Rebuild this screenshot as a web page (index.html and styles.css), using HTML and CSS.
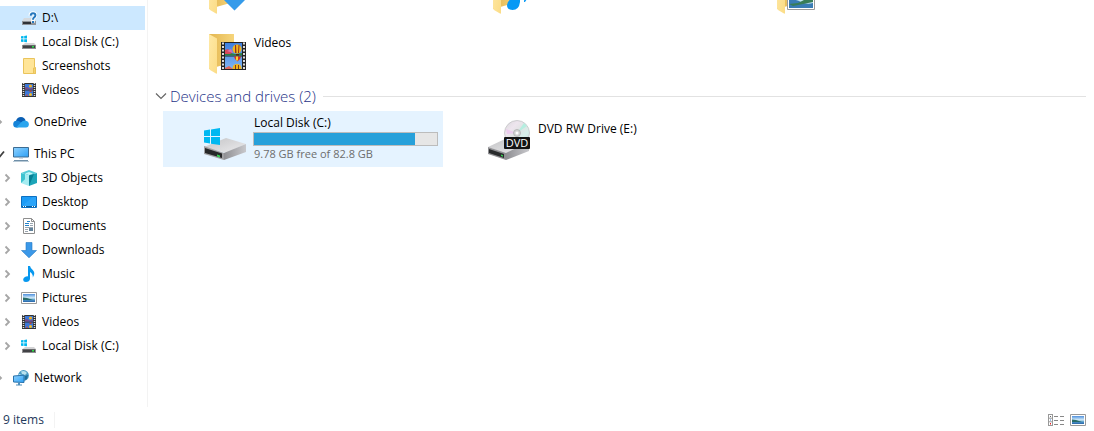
FILE: index.html
```html
<!DOCTYPE html>
<html lang="en">
<head>
<meta charset="utf-8">
<title>This PC</title>
<link rel="stylesheet" href="styles.css">
</head>
<body>
<svg class="sprite" aria-hidden="true">
  <defs>
    <linearGradient id="g-folder" x1="0" y1="0" x2="1" y2="1"><stop offset="0" stop-color="#ffe9a6"/><stop offset="1" stop-color="#fbdc86"/></linearGradient>
    <linearGradient id="g-back" x1="0" y1="0" x2="1" y2="0"><stop offset="0" stop-color="#e3b650"/><stop offset="1" stop-color="#f6d57c"/></linearGradient>
    <linearGradient id="g-sky" x1="0" y1="0" x2="0" y2="1"><stop offset="0" stop-color="#3f7fe0"/><stop offset="1" stop-color="#7fb5f2"/></linearGradient>
    <linearGradient id="g-screen" x1="0" y1="0" x2="1" y2="1"><stop offset="0" stop-color="#8fd2ff"/><stop offset="1" stop-color="#2da0f5"/></linearGradient>
    <linearGradient id="g-metal" x1="0" y1="0" x2="1" y2="1"><stop offset="0" stop-color="#c4c4c6"/><stop offset="1" stop-color="#ececee"/></linearGradient>
    <linearGradient id="g-side" x1="0" y1="0" x2="1" y2="0"><stop offset="0" stop-color="#8f8f93"/><stop offset="1" stop-color="#c8c8cc"/></linearGradient>
    <linearGradient id="g-photo" x1="0" y1="0" x2="0" y2="1"><stop offset="0" stop-color="#4f90dd"/><stop offset=".5" stop-color="#d8effa"/><stop offset=".6" stop-color="#8fc0d8"/><stop offset=".75" stop-color="#4a93c8"/><stop offset="1" stop-color="#2a64a8"/></linearGradient>
    <linearGradient id="g-disc" x1="0" y1="0" x2="1" y2="1"><stop offset="0" stop-color="#d8d8da"/><stop offset=".3" stop-color="#eee5ee"/><stop offset=".5" stop-color="#e0e3e3"/><stop offset=".7" stop-color="#d7f0ea"/><stop offset="1" stop-color="#d0d0d2"/></linearGradient>
  </defs>
  <symbol id="chev" viewBox="0 0 16 16"><path d="M5.500 4.500 9 8l-3.500 3.500" fill="none" stroke="#a6a6a6" stroke-width="1.800"/></symbol>
  <symbol id="chev-open" viewBox="0 0 16 16"><path d="M4 7.500 7.500 11l4.500-5.500" fill="none" stroke="#404040" stroke-width="1.800"/></symbol>
  <symbol id="drive-unknown" viewBox="0 0 16 16">
    <path d="M3 8h10l2 3H1z" fill="#d5d9dd"/><path d="M1 11h14v4H1z" fill="#909499"/><path d="M2 12h8v2H2z" fill="#303237"/>
    <path d="M9.500 6V4.500Q10 3 12 3q2.500 0 2.500 2.300 0 1.300-1.500 2.200-1 .7-1 2.200v3" fill="none" stroke="#fff" stroke-width="3.600"/>
    <path d="M9.700 5.700Q9.700 3.200 12 3.200q2.400 0 2.400 2.100 0 1.300-1.400 2.200-1 .8-1 2.200M12 11v2" fill="none" stroke="#2677bd" stroke-width="2"/>
  </symbol>
  <symbol id="drive-win" viewBox="0 0 16 16">
    <path d="M0 2.300 2.500 2v2.600H0zM3.200 1.900 6 1.600v3H3.200zM0 5.300h2.500V8L0 7.700zM3.200 5.300H6v3l-2.800-.3z" fill="#00b7ef"/>
    <path d="M4 9h9l2 2H1.500z" fill="#d3d3d5"/><path d="M1 11h14v4H1z" fill="#909092"/><path d="M2 11.500h12v2.500H2z" fill="#414245"/><path d="M11 12h2v1.500h-2z" fill="#2bdc45"/>
  </symbol>
  <symbol id="folder-small" viewBox="0 0 16 16"><path d="M2.500.5h11v9h1v6h-12z" fill="#ffe598" stroke="#eac45c"/><path d="M12.500 15.500v-5.500h2v5.500z" fill="#f6d46e" stroke="#eac45c"/></symbol>
  <symbol id="film" viewBox="0 0 16 16">
    <path d="M1 1h14v14H1z" fill="#333"/><path d="M4 2h8v5.500H4zM4 8.500h8V14H4z" fill="#3c78d8"/>
    <path d="M2.500 1v14M13.500 1v14" stroke="#ddd" stroke-width="1.500" stroke-dasharray="1 1"/>
    <path d="M4 5.500 6 5l2 1.500 4-.5v1.500H4z" fill="#7a4a85"/><circle cx="9.500" cy="4" r="1.600" fill="#edae28"/><path d="M8.500 8.500h2v1.500h-2z" fill="#c8402c"/><circle cx="9.500" cy="12.500" r="1.500" fill="#efbc28"/><path d="M5 12.500h2V14H5z" fill="#a4596c"/>
  </symbol>
  <symbol id="cloud" viewBox="0 0 16 16"><path d="M3 7Q4 3 8 3q3.500 0 4.600 3.500L8 10z" fill="#0a5fb4"/><path d="M.2 10.500Q0 7 3.500 6.700q2-.3 4 1.300l3 3-6 2.500H3Q.4 13.400.2 10.500z" fill="#1583d8"/><path d="M8 8.500Q10 6.200 12.700 6.700 16 7.400 15.900 10.500 15.600 13.500 13 13.500H3z" fill="#2aa5ee"/></symbol>
  <symbol id="pc" viewBox="0 0 16 16"><path d="M.5 1.500h15v9.500H.5z" fill="url(#g-screen)" stroke="#3c6c93"/><path d="M6 11.500h4v1H6z" fill="#9eb5c6"/><path d="M1 14.500h14" stroke="#6f8fa8"/><path d="M0 15.500h16" stroke="#b7c9d6"/></symbol>
  <symbol id="cube" viewBox="0 0 16 16"><path d="M0 3 8 0l8 3-8 2.500z" fill="#56ccd8"/><path d="m0 3 8 2.500V16l-8-3z" fill="#a5ecf1"/><path d="m8 5.500 8-2.500v10l-8 3z" fill="#1ca5b8"/><path d="M0 3 4 4.300v5L0 13z" fill="#3dc3d0"/><path d="m8 5.500 5-1.500-5 12z" fill="#078095"/><path d="m4 3.500 4-1.500 4 1.500-4 1.500z" fill="#c2f5f8"/></symbol>
  <symbol id="desk" viewBox="0 0 16 16"><path d="M.5 2.500h15v11H.5z" fill="#1c9cf6" stroke="#0c70c2"/><path d="M1 12.500h14" stroke="#075f9f"/><path d="M2 12.500h1m1 0h1m6 0h1m1 0h1" stroke="#fff"/><path d="M1 12 12 3h3v9z" fill="#42b1ff" opacity=".4"/></symbol>
  <symbol id="doc" viewBox="0 0 16 16"><path d="M2.500.5h8l3 3v12h-11z" fill="#fff" stroke="#8e8e8e"/><path d="M10.500.5v3h3" fill="none" stroke="#8e8e8e"/><path d="M6 3.500h3M4 5.500h4M4 7.500h4" stroke="#2683ca"/><path d="M9 5.500h3M9 7.500h3M4 9.500h8M4 11.500h3M4 13.500h3" stroke="#9aa6b0"/><path d="M8 10h4v3H8z" fill="#62829b"/></symbol>
  <symbol id="down" viewBox="0 0 16 16"><path d="M5 0.500h6v8h4.500L8 15.800.5 8.500H5z" fill="#3b98e8" stroke="#2478c4" stroke-width=".6"/></symbol>
  <symbol id="note" viewBox="0 0 16 16"><path d="M7 0h2q.5 2 2.500 3.800Q14 6 13 9l-1.200 2.500Q12.200 8 9 6v7q-.5 3-4 3-2.800 0-2.800-2.500Q2.500 10.500 7 10.300z" fill="#0798ef"/></symbol>
  <symbol id="photo" viewBox="0 0 16 16"><path d="M.5 2.500h15v11H.5z" fill="#fff" stroke="#999"/><path d="M2 4h12v8H2z" fill="url(#g-photo)"/><path d="m2 7.500 4 .5 6 2H2z" fill="#286c68"/></symbol>
  <symbol id="net" viewBox="0 0 16 16"><circle cx="10.500" cy="5.500" r="5.400" fill="#4a9bc4"/><path d="M8 1.500q4-1.500 6 1.500l-2 2-3-1zM6 4l3 1-1 3-3-1z" fill="#b9e2ee"/><path d="m12 6 3-1-1 4-2 1z" fill="#1f6d99"/><path d="M.5 6 11 5.200v7.300L.5 12z" fill="url(#g-screen)" stroke="#2872aa"/><path d="M5 12.500h2v2H5zM3 14.500h6v1H3z" fill="#4f8eba"/></symbol>
  <symbol id="folder-big" viewBox="0 0 48 48"><path d="M8 5h25v28l-25 7z" fill="url(#g-back)"/><path d="m8 5 8 4.500V44q0 1-1 .5L9 41q-1-1-1-2z" fill="url(#g-folder)"/></symbol>
  <symbol id="video-folder" viewBox="0 0 48 48">
    <use href="#folder-big"/>
    <path d="M20 13h25v28H20z" fill="#242424"/><path d="M24 14h17v12.500H24zM24 27.500h17V40H24z" fill="url(#g-sky)"/>
    <path d="M22 13.500V41M43 13.500V41" stroke="#ddd" stroke-width="2" stroke-dasharray="2 1.500"/>
    <path d="m24 23 3-1 3 2 4 1 7-1v2.500H24z" fill="#2c8142"/><path d="m24 21 3-1 4 4-2 1h-5z" fill="#d84a5a"/><path d="m26 22 4-2 2 4z" fill="#dc6dad"/>
    <circle cx="36" cy="20" r="4.500" fill="#f4b51b"/><path d="M34 16h1l.5 8H34zM37.500 16h1L38 24h-1z" fill="#92351c"/><path d="M35 25h3v1.500h-3z" fill="#542514"/>
    <path d="M33 27.500h7q-.5 3-3.500 5-3-2-3.500-5z" fill="#dc321d"/><path d="M35 27.500h2v4h-2z" fill="#f6d431"/><path d="M31.500 40q0-5 4.500-5t4.500 5z" fill="#f4b51b"/><path d="M34 36h1v4h-1zM37 36h1v4h-1z" fill="#7c3d1e"/><path d="m24 39 4-2 4 3h-8z" fill="#df675c"/>
  </symbol>
  <symbol id="down-folder" viewBox="0 0 48 48"><use href="#folder-big"/><path d="M28 20h12v10h5L33.500 41.500 22 30h6z" fill="#359bea"/></symbol>
  <symbol id="music-folder" viewBox="0 0 48 48"><use href="#folder-big"/><path d="M31 10h4q1 5 5 9 4 5 2 11l-2 3h-1q1-9-4-12v12q-1 8-7.500 8-5.500 0-5.500-5 1-7 9-6z" fill="#0799f5"/></symbol>
  <symbol id="photo-folder" viewBox="0 0 48 48"><use href="#folder-big"/><path d="M18.500 18.500h27v22h-27z" fill="#fff" stroke="#9a9a9a"/><path d="M20 20h24v19H20z" fill="#c5e5f3"/><path d="M20 30q6 0 12 3t12 1v5H20z" fill="#3a7cb4"/><path d="m44 28-9 3-6 3-9 1 4 2 20-4z" fill="#397d57"/></symbol>
  <symbol id="drive-c" viewBox="0 0 48 48">
    <path d="m3 32 22-9 20 6-20 9z" fill="url(#g-metal)"/><path d="m3 31 20 7v7L3 39z" fill="#a0a0a3"/><path d="m23 38 22-9v8l-22 8z" fill="url(#g-side)"/>
    <path d="m4 33 17 5.500V43L4 38z" fill="#262829"/><path d="m16 39.500 3 1v2l-3-1z" fill="#35d452"/>
    <path d="m3 15.500 6-.9V21H3zM10 14.500 19 13v8h-9zM3 22h6v6.500l-6-.9zM10 22h9v8l-9-1.300z" fill="#00b8f1"/>
  </symbol>
  <symbol id="view-list" viewBox="0 0 16 16"><path d="M.5 2v12M4.500 2v12M0 2.500h5M0 6.200h5M0 9.800h5M0 13.500h5" stroke="#999" fill="none"/><path d="M2 4h1v1H2z" fill="#666"/><path d="M2 7.500h1v1H2z" fill="#2c78e0"/><path d="M2 11h1v1.500H2z" fill="#e22"/><path d="M6 4.500h4m2 0h4M6 8.500h4m2 0h4M6 12.500h4m2 0h4" stroke="#888"/></symbol>
</svg>

<main class="explorer">
  <nav class="tree" aria-label="Folders">
    <div class="row selected"><span class="toggle"></span><a href="#"><svg class="icon"><use href="#drive-unknown"/></svg>D:\</a></div>
    <div class="row"><span class="toggle"></span><a href="#"><svg class="icon"><use href="#drive-win"/></svg>Local Disk (C:)</a></div>
    <div class="row"><span class="toggle"></span><a href="#"><svg class="icon"><use href="#folder-small"/></svg>Screenshots</a></div>
    <div class="row"><span class="toggle"></span><a href="#"><svg class="icon"><use href="#film"/></svg>Videos</a></div>
    <div class="row root"><button class="toggle" aria-label="Expand OneDrive"><svg class="icon"><use href="#chev"/></svg></button><a href="#"><svg class="icon"><use href="#cloud"/></svg>OneDrive</a></div>
    <div class="row root"><button class="toggle" aria-label="Collapse This PC"><svg class="icon"><use href="#chev-open"/></svg></button><a href="#"><svg class="icon"><use href="#pc"/></svg>This PC</a></div>
    <div class="row"><button class="toggle" aria-label="Expand 3D Objects"><svg class="icon"><use href="#chev"/></svg></button><a href="#"><svg class="icon"><use href="#cube"/></svg>3D Objects</a></div>
    <div class="row"><button class="toggle" aria-label="Expand Desktop"><svg class="icon"><use href="#chev"/></svg></button><a href="#"><svg class="icon"><use href="#desk"/></svg>Desktop</a></div>
    <div class="row"><button class="toggle" aria-label="Expand Documents"><svg class="icon"><use href="#chev"/></svg></button><a href="#"><svg class="icon"><use href="#doc"/></svg>Documents</a></div>
    <div class="row"><button class="toggle" aria-label="Expand Downloads"><svg class="icon"><use href="#chev"/></svg></button><a href="#"><svg class="icon"><use href="#down"/></svg>Downloads</a></div>
    <div class="row"><button class="toggle" aria-label="Expand Music"><svg class="icon"><use href="#chev"/></svg></button><a href="#"><svg class="icon"><use href="#note"/></svg>Music</a></div>
    <div class="row"><button class="toggle" aria-label="Expand Pictures"><svg class="icon"><use href="#chev"/></svg></button><a href="#"><svg class="icon"><use href="#photo"/></svg>Pictures</a></div>
    <div class="row"><button class="toggle" aria-label="Expand Videos"><svg class="icon"><use href="#chev"/></svg></button><a href="#"><svg class="icon"><use href="#film"/></svg>Videos</a></div>
    <div class="row"><button class="toggle" aria-label="Expand Local Disk"><svg class="icon"><use href="#chev"/></svg></button><a href="#"><svg class="icon"><use href="#drive-win"/></svg>Local Disk (C:)</a></div>
    <div class="row root"><button class="toggle" aria-label="Expand Network"><svg class="icon"><use href="#chev"/></svg></button><a href="#"><svg class="icon"><use href="#net"/></svg>Network</a></div>
  </nav>

  <section class="content">
    <div class="tiles clipped">
      <a class="tile" href="#" aria-label="Downloads"><svg class="big"><use href="#down-folder"/></svg></a>
      <a class="tile" href="#" aria-label="Music"><svg class="big"><use href="#music-folder"/></svg></a>
      <a class="tile" href="#" aria-label="Pictures"><svg class="big"><use href="#photo-folder"/></svg></a>
    </div>
    <div class="tiles">
      <a class="tile" href="#"><svg class="big"><use href="#video-folder"/></svg><span class="name">Videos</span></a>
    </div>
    <div class="group">
      <button class="group-toggle"><svg class="group-chev" viewBox="0 0 12 12"><path d="m1 3.500 5 5 5-5" fill="none" stroke="#666" stroke-width="1.200"/></svg>Devices and drives (2)</button>
      <span class="rule"></span>
    </div>
    <div class="tiles">
      <a class="tile hover" href="#">
        <svg class="big"><use href="#drive-c"/></svg>
        <span class="details">
          <span>Local Disk (C:)</span>
          <span class="bar"><span class="fill" style="width:88%"></span></span>
          <span class="free">9.78 GB free of 82.8 GB</span>
        </span>
      </a>
      <a class="tile" href="#">
        <svg class="big" viewBox="0 0 48 48">
          <path d="m3 32 17-8 25 3-23 12z" fill="url(#g-metal)"/><path d="m3 32 18 6v7L3 39z" fill="#909093"/><path d="m21 38 23-11v9l-23 9z" fill="url(#g-side)"/>
          <path d="m4 34 15 5v4L4 38z" fill="#292b2c"/><path d="m16 39.500 2 .7v1.500l-2-.7z" fill="#35d452"/>
          <circle cx="32" cy="18" r="12.500" fill="url(#g-disc)" stroke="#bdbdc0" stroke-width=".7"/><path d="m32 18 7-10 3 3z" fill="#b6eee0"/><path d="m32 18-11-4 1 5z" fill="#ecccef"/><circle cx="32" cy="18" r="3.500" fill="#d4d4d4" stroke="#aaa" stroke-width=".7"/><circle cx="32" cy="18" r="1.500" fill="#fff"/>
          <rect x="19" y="22" width="26" height="12" rx="1" fill="#141414"/>
          <text x="32" y="32" class="disc-label">DVD</text>
        </svg>
        <span class="name">DVD RW Drive (E:)</span>
      </a>
    </div>
  </section>
</main>

<footer class="status">
  <span class="count">9 items</span>
  <span class="views">
    <button aria-label="Details view"><svg class="icon"><use href="#view-list"/></svg></button>
    <button aria-label="Thumbnail view"><svg class="icon"><use href="#photo"/></svg></button>
  </span>
</footer>
</body>
</html>
```
FILE: styles.css
```css
* { box-sizing: border-box; }

body {
  margin: 0;
  min-height: 100vh;
  display: flex;
  flex-direction: column;
  overflow: hidden;
  background: #fff;
  color: #000;
  font: 12px/16px "Segoe UI", "Open Sans", "Noto Sans", sans-serif;
}

a { color: inherit; text-decoration: none; }

button {
  padding: 0;
  border: 0;
  background: none;
  color: inherit;
  font: inherit;
}

.sprite { position: absolute; width: 0; height: 0; }
.icon { display: block; flex: none; width: 16px; height: 16px; }
.explorer { flex: 1; display: flex; }

.tree {
  flex: none;
  width: 148px;
  padding: 6px 2px 17px 0;
  border-right: 1px solid #f3f3f3;
  overflow: hidden;
}

.row { display: flex; align-items: center; gap: 5px; height: 24px; white-space: nowrap; }
.row a { display: flex; align-items: center; gap: 5px; }
.row.selected { background: #cce8ff; }
.row.root { margin-left: -8px; }
.row:not(.root) + .root, .root + .root { margin-top: 8px; }
.toggle { flex: none; width: 16px; }

.content { flex: 1; min-width: 0; padding: 0 8px 0 7px; }

.tiles {
  display: grid;
  grid-template-columns: repeat(auto-fill, 280px);
  gap: 4px;
  margin: 0 0 4px 8px;
}

.tiles.clipped { height: 21px; align-content: end; overflow: hidden; }
.tile { display: flex; gap: 5px; height: 56px; padding: 4px 0 4px 38px; }
.tile.hover { background: #e5f3ff; }
.big { flex: none; width: 48px; height: 48px; }
.name { padding-top: 6px; }
.details { display: flex; flex-direction: column; flex: 0 1 185px; margin-left: -1px; }
.details > span:not(.bar) { padding-left: 1px; }
.bar { height: 14px; margin: 1px 0 0; border: 1px solid #bcbcbc; background: #e6e6e6; }
.fill { display: block; height: 100%; background: #26a0da; }
.free { color: #6d6d6d; font-size: 11px; }
.disc-label { fill: #fff; font: 11px "Segoe UI", "Open Sans", sans-serif; text-anchor: middle; }

.group { display: flex; align-items: center; gap: 7px; height: 26px; padding-bottom: 4px; }
.group-toggle { display: flex; align-items: center; gap: 3px; color: #1e3287; font-size: 15px; font-weight: 300; line-height: 20px; }
.group-chev { width: 12px; height: 12px; }
.rule { flex: 1; height: 1px; background: #e2e2e2; }

.status {
  display: flex;
  align-items: center;
  justify-content: space-between;
  height: 24px;
  padding: 2px 8px 0 3px;
  color: #1e395b;
}

.count { padding-right: 10px; border-right: 1px solid #f3f3f3; }
.views { display: flex; gap: 6px; }
```
